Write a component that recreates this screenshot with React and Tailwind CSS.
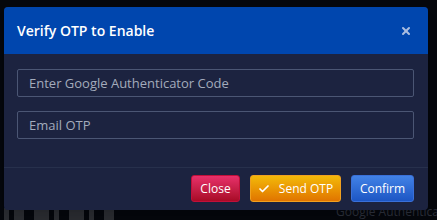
import { Check, X } from 'lucide-react';

const font = { fontFamily: '"Open Sans", "Noto Sans", sans-serif' };

// faint QR-like pattern peeking under the modal
const qrCells = [1, 0, 1, 1, 0, 0, 1, 1, 1, 0, 1, 0, 0, 1, 1, 1, 0, 1, 0, 0, 1, 1];

export default function App() {
  return (
    <div className="relative w-[437px] h-[220px] overflow-hidden bg-[#05070c]" style={font}>
      {/* background content under the overlay */}
      <div className="absolute left-[4px] top-[208px] flex">
        {qrCells.map((c, i) => (
          <div key={i} className={`w-[5px] h-[12px] ${c ? 'bg-[#2a2c31]' : 'bg-transparent'}`} />
        ))}
      </div>
      <div className="absolute left-[336px] top-[203px] text-[12px] text-[#2b2f3a] whitespace-nowrap">
        Google Authentica
      </div>

      <div className="absolute left-[4px] top-[7px] w-[424px] h-[203px] rounded-[4px] overflow-hidden bg-[#1c2340] flex flex-col shadow-lg">
        {/* Header */}
        <div className="h-[47px] shrink-0 bg-[#0046ae] flex items-center justify-between pl-[13px] pr-[16px]">
          <h3 className="text-[14px] font-semibold text-white">Verify OTP to Enable</h3>
          <X className="w-[12px] h-[12px] text-[#a9bde0]" strokeWidth={4} />
        </div>

        {/* Body */}
        <div className="flex flex-col gap-[14px] pt-[15px] pb-[28px] pl-[13px] pr-[14px]">
          <input
            placeholder="Enter Google Authenticator Code"
            className="h-[28px] w-full rounded-[2px] border border-[#4b5674] bg-[#1c2340] px-[11px] text-[13px] text-white placeholder:text-[#a3abbc] outline-none"
          />
          <input
            placeholder="Email OTP"
            className="h-[28px] w-full rounded-[2px] border border-[#4b5674] bg-[#1c2340] px-[11px] text-[13px] text-white placeholder:text-[#a3abbc] outline-none"
          />
        </div>

        {/* Footer */}
        <div className="border-t border-[#27304c] flex justify-end items-start gap-[10px] pt-[7px] pr-[14px]">
          <button className="h-[27px] w-[49px] rounded-[3px] border border-[#c0103a] bg-gradient-to-b from-[#e8306a] to-[#a80a26] text-[12px] text-white">
            Close
          </button>
          <button className="h-[27px] w-[91px] rounded-[3px] border border-[#f0a020] bg-gradient-to-b from-[#f2b90a] to-[#e07400] text-[12px] text-white flex items-center justify-center gap-[9px]">
            <Check className="w-[12px] h-[12px]" strokeWidth={3.5} />
            Send OTP
          </button>
          <button className="h-[27px] w-[63px] rounded-[3px] border border-[#3a70d8] bg-gradient-to-b from-[#4282e6] to-[#1d56c4] text-[12px] text-white">
            Confirm
          </button>
        </div>
      </div>
    </div>
  );
}
